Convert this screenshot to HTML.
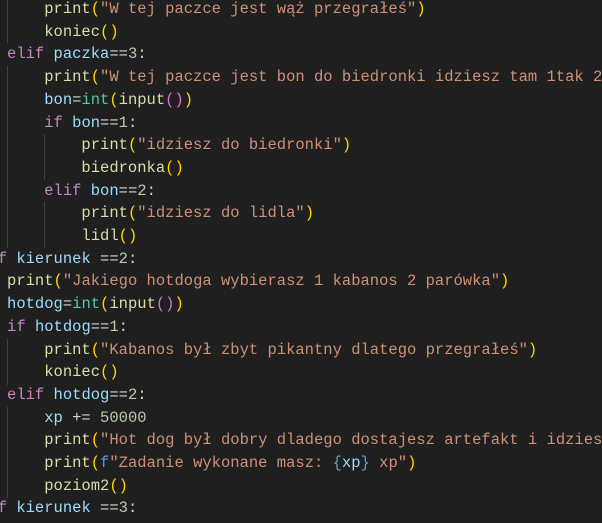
<!DOCTYPE html>
<html><head><meta charset="utf-8"><style>
html,body{margin:0;padding:0;background:#1f1f1f;width:602px;height:523px;overflow:hidden}
.wrap{position:relative;width:602px;height:523px;overflow:hidden}
pre{position:absolute;left:-11.6px;top:-2px;margin:0;font-family:"Liberation Mono",monospace;font-size:15.5px;line-height:22.7px;color:#d4d4d4;white-space:pre}
.f{color:#dcdcaa}.s{color:#ce9178}.k{color:#c586c0}.v{color:#9cdcfe}.n{color:#b5cea8}.c{color:#4ec9b0}.b1{color:#ffd700}.b2{color:#da70d6}.b3{color:#179fff}.p{color:#569cd6}
.g{position:absolute;width:1px;background:#404040}
</style></head><body><div class="wrap">
<div class="g" style="left:7px;top:-2px;height:45px"></div>
<div class="g" style="left:7px;top:66px;height:182px"></div>
<div class="g" style="left:44px;top:134px;height:46px"></div>
<div class="g" style="left:44px;top:202px;height:46px"></div>
<div class="g" style="left:7px;top:339px;height:46px"></div>
<div class="g" style="left:7px;top:407px;height:91px"></div>
<pre>      <span class="f">print</span><span class="b1">(</span><span class="s">"W tej paczce jest wąż przegrałeś"</span><span class="b1">)</span>
      <span class="f">koniec</span><span class="b1">()</span>
  <span class="k">elif</span> <span class="v">paczka</span>==<span class="n">3</span>:
      <span class="f">print</span><span class="b1">(</span><span class="s">"W tej paczce jest bon do biedronki idziesz tam 1tak 2nie"</span><span class="b1">)</span>
      <span class="v">bon</span>=<span class="c">int</span><span class="b1">(</span><span class="f">input</span><span class="b2">()</span><span class="b1">)</span>
      <span class="k">if</span> <span class="v">bon</span>==<span class="n">1</span>:
          <span class="f">print</span><span class="b1">(</span><span class="s">"idziesz do biedronki"</span><span class="b1">)</span>
          <span class="f">biedronka</span><span class="b1">()</span>
      <span class="k">elif</span> <span class="v">bon</span>==<span class="n">2</span>:
          <span class="f">print</span><span class="b1">(</span><span class="s">"idziesz do lidla"</span><span class="b1">)</span>
          <span class="f">lidl</span><span class="b1">()</span>
<span class="k">if</span> <span class="v">kierunek</span> ==<span class="n">2</span>:
  <span class="f">print</span><span class="b1">(</span><span class="s">"Jakiego hotdoga wybierasz 1 kabanos 2 parówka"</span><span class="b1">)</span>
  <span class="v">hotdog</span>=<span class="c">int</span><span class="b1">(</span><span class="f">input</span><span class="b2">()</span><span class="b1">)</span>
  <span class="k">if</span> <span class="v">hotdog</span>==<span class="n">1</span>:
      <span class="f">print</span><span class="b1">(</span><span class="s">"Kabanos był zbyt pikantny dlatego przegrałeś"</span><span class="b1">)</span>
      <span class="f">koniec</span><span class="b1">()</span>
  <span class="k">elif</span> <span class="v">hotdog</span>==<span class="n">2</span>:
      <span class="v">xp</span> += <span class="n">50000</span>
      <span class="f">print</span><span class="b1">(</span><span class="s">"Hot dog był dobry dladego dostajesz artefakt i idziesz"</span>
      <span class="f">print</span><span class="b1">(</span><span class="p">f</span><span class="s">"Zadanie wykonane masz: </span><span class="p">{</span><span class="v">xp</span><span class="p">}</span><span class="s"> xp"</span><span class="b1">)</span>
      <span class="f">poziom2</span><span class="b1">()</span>
<span class="k">if</span> <span class="v">kierunek</span> ==<span class="n">3</span>:
</pre>
</div></body></html>
